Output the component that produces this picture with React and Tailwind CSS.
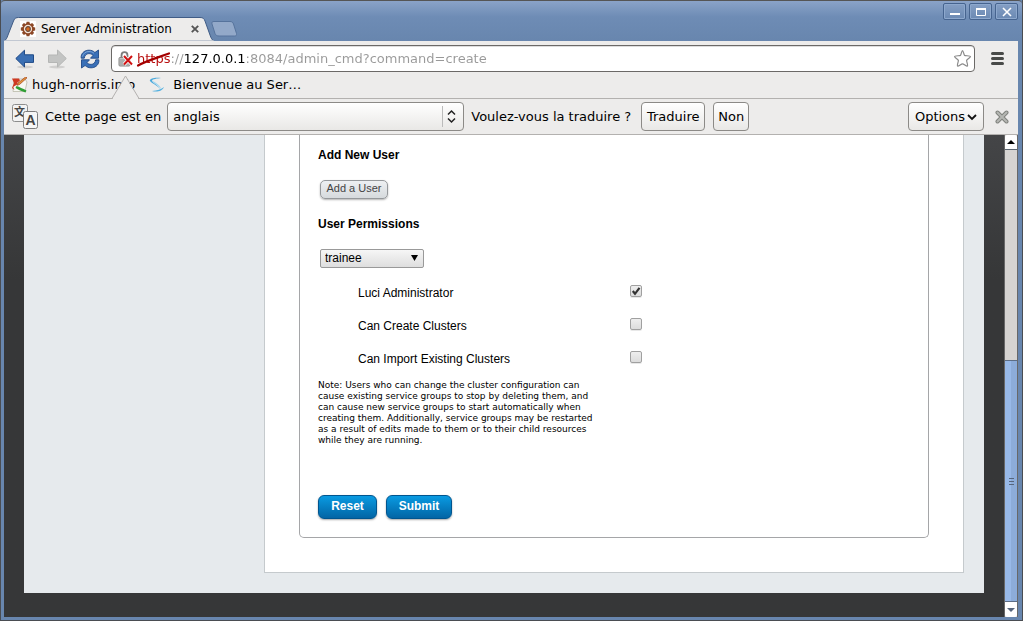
import { useState } from "react";

const permissions = [
  { id: "luci-admin", label: "Luci Administrator", checked: true },
  { id: "create-clusters", label: "Can Create Clusters", checked: false },
  { id: "import-clusters", label: "Can Import Existing Clusters", checked: false },
];

const windowButton =
  "flex h-[17px] w-[23px] items-center justify-center rounded-[2px] border border-[#46648f] shadow-[inset_0_0_0_1px_#8da8cd]";

const infoButton =
  "h-[29px] rounded-[4px] border border-[#8c8a87] bg-linear-to-b from-white to-[#e9e8e6] text-center whitespace-nowrap";

const blueButton =
  "h-6 rounded-[6px] border border-[#00558f] bg-linear-to-b from-[#0a9be2] to-[#0365a5] pb-[2px] text-[12px] font-bold text-white shadow-[0_1px_2px_rgba(0,0,0,0.35)]";

function GearIcon() {
  return (
    <svg className="size-4 shrink-0" viewBox="0 0 16 16">
      <rect width="16" height="16" fill="#fff" />
      {[0, 45, 90, 135, 180, 225, 270, 315].map((angle) => (
        <path
          key={angle}
          d="M6 3.2 6.6.8h2.8l.6 2.4z"
          fill="#8a4a2a"
          transform={`rotate(${angle} 8 8)`}
        />
      ))}
      <circle cx="8" cy="8" r="4.9" fill="#f3e4d8" stroke="#8e4523" strokeWidth="1.5" />
      <circle cx="8" cy="8" r="2.3" fill="#d96a1e" stroke="#6b4a3a" strokeWidth="1.2" />
    </svg>
  );
}

function ArrowIcon({ disabled }) {
  return (
    <svg className="h-5 w-5" viewBox="0 0 20 20">
      <ellipse cx="10" cy="18" rx="8" ry="1.4" fill="#000" opacity="0.12" />
      {disabled ? (
        <path d="M19.3 9.5 10.5 1v5H1.5v7.5h9v4.5z" fill="#c3c4c3" stroke="#b5b6b5" />
      ) : (
        <path d="M.8 9.5 9.5 1.2v4.6h9v7.6h-9V18z" fill="#3b6fb3" stroke="#204a87" />
      )}
    </svg>
  );
}

function ReloadIcon() {
  return (
    <svg className="h-5 w-5" viewBox="0 0 20 20">
      <g fill="#3a70b7" stroke="#204a87" strokeWidth="0.9" strokeLinejoin="round">
        <path d="M1.2 9.2V7.3C1.8 3.5 5 1.2 9 1.2c2.4 0 4.3.8 5.9 2.3L18.5 1v8.2h-8l2.6-2.9C11.9 5.1 10.5 4.6 8.9 4.6c-2.8 0-4.3 2-4.6 4.6z" />
        <path d="M18.8 10.8v1.9c-.6 3.8-3.8 6.1-7.8 6.1-2.4 0-4.3-.8-5.9-2.3L1.5 19v-8.2h8l-2.6 2.9c1.2 1.2 2.6 1.7 4.2 1.7 2.8 0 4.3-2 4.6-4.6z" />
      </g>
      <path d="M2.5 7.5C3.4 4 6 2.5 9 2.5c2 0 3.6.6 5 1.8" fill="none" stroke="#8fb4e0" strokeWidth="0.8" />
    </svg>
  );
}

function LockIcon() {
  return (
    <svg className="h-4 w-4 shrink-0" viewBox="0 0 16 16">
      <path d="M3.5 7V4.5a3 3.3 0 0 1 6 0V7" fill="none" stroke="#7c7c7c" strokeWidth="1.8" />
      <rect x="1" y="6.5" width="11" height="8.5" rx="1" fill="#c5c5c3" stroke="#868685" />
      <path d="M2 9h9M2 11h9M2 13h9" stroke="#8c8c8a" strokeWidth="0.8" />
      <path d="M6 5l8 8.500M14 5L6 13.500" stroke="#fff" strokeWidth="3.600" />
      <path d="M6 5l8 8.500M14 5L6 13.500" stroke="#cf1111" strokeWidth="2" />
    </svg>
  );
}

function TitleBar() {
  return (
    <header className="flex h-[41px] items-start justify-between rounded-t-[4px] border-t border-[#555] bg-linear-to-b from-[#8aa3c8] via-[#6e8cb5] via-40% to-[#6886ae] pr-1 pl-[3px]">
      <div className="flex items-start pt-4">
        <div className="relative flex h-6 w-[210px] items-center">
          <svg className="absolute inset-0 h-6 w-[210px]" viewBox="0 0 210 24">
            <path
              d="M0 24c2-1 3-3 4-6L9.5 4c1-3 3-3.5 5-3.5H196c3 0 4 1 5 3.5l5 14c1 3 2 5 4 6z"
              fill="#edeceb"
              stroke="#405c86"
            />
            <path d="M0 24h210" stroke="#edeceb" strokeWidth="1" />
          </svg>
          <div className="relative flex w-full items-center pr-[11px] pl-4">
            <GearIcon />
            <span className="ml-[5px] flex-1 text-[12px] whitespace-nowrap">Server Administration</span>
            <button aria-label="Close tab" className="flex size-4 items-center justify-center">
              <svg className="size-2" viewBox="0 0 8 8">
                <path d="M.8.8l6.4 6.4M7.2.8L.8 7.2" stroke="#555" strokeWidth="1.9" />
              </svg>
            </button>
          </div>
        </div>
        <button aria-label="New tab" className="-ml-[3px] mt-1">
          <svg className="h-4 w-[26px]" viewBox="0 0 26 16">
            <path
              d="M3 .5h16c2 0 3 1 3.500 2.500l3 9.500c.4 1.800-.3 2.500-2 2.500H8c-2 0-3.200-.7-4-2.500L1 3C.5 1.500 1 .5 3 .5z"
              fill="#93a9c9"
              stroke="#56739c"
            />
          </svg>
        </button>
      </div>
      <div className="flex gap-[3px] pt-[2px]">
        <button aria-label="Minimize" className={windowButton}>
          <svg className="h-3 w-3" viewBox="0 0 12 12">
            <path d="M1 8h10" stroke="#fff" strokeWidth="2" />
          </svg>
        </button>
        <button aria-label="Maximize" className={windowButton}>
          <svg className="h-3 w-3" viewBox="0 0 12 12">
            <path d="M1.500 2.500h9v7h-9z" fill="none" stroke="#fff" />
            <path d="M1 3h10" stroke="#fff" strokeWidth="2" />
          </svg>
        </button>
        <button aria-label="Close" className={windowButton}>
          <svg className="h-3 w-3" viewBox="0 0 12 12">
            <path d="M2 2l8 8M10 2l-8 8" stroke="#fff" strokeWidth="1.600" />
          </svg>
        </button>
      </div>
    </header>
  );
}

function Toolbar() {
  return (
    <div className="flex h-[33px] items-center pt-[2px] pr-[14px] pl-[11px]">
      <button aria-label="Back">
        <ArrowIcon />
      </button>
      <button aria-label="Forward" className="ml-3">
        <ArrowIcon disabled />
      </button>
      <button aria-label="Reload" className="ml-[13px]">
        <ReloadIcon />
      </button>
      <div className="relative ml-[11px] flex h-[27px] flex-1 items-center rounded-[4px] border border-[#6b6967] bg-white pr-[2px] pl-[6px] shadow-[inset_0_1px_0_#ddd]">
        <LockIcon />
        <input
          aria-label="Address"
          defaultValue="https://127.0.0.1:8084/admin_cmd?command=create"
          className="ml-[3px] h-6 min-w-0 flex-1 bg-linear-[90deg,#b80d0d_34px,#999_34px,#999_47px,#000_47px,#000_109px,#999_109px] bg-clip-text text-[13px] text-transparent outline-none"
        />
        <svg className="pointer-events-none absolute left-[24px] h-4 w-9" viewBox="0 0 36 16">
          <path d="M2 14.500C11 9.500 22 6.500 33 2.500" fill="none" stroke="#a40000" strokeWidth="2.200" strokeLinecap="round" />
        </svg>
        <button aria-label="Bookmark this page">
          <svg className="h-[19px] w-[19px]" viewBox="0 0 19 19">
            <path
              d="M9.500 1.500c.8 0 1.200 3.800 2 4.900 1 .5 6 .2 6 1.200s-3.600 2.700-3.900 3.900c0 1.200 1.600 5.100.8 5.600-.9.500-3.700-2.300-4.900-2.300s-4 2.800-4.900 2.300c-.8-.5.8-4.400.8-5.600C5.100 10.300 1.500 8.600 1.500 7.600s5-.7 6-1.200c.8-1.100 1.200-4.900 2-4.900z"
              fill="#fff"
              stroke="#8a8a8a"
              strokeWidth="1.200"
            />
          </svg>
        </button>
      </div>
      <button aria-label="Menu" className="ml-4 flex w-[13px] flex-col gap-[2px]">
        <span className="h-[3px] rounded-full bg-[#484a48]" />
        <span className="h-[3px] rounded-full bg-[#484a48]" />
        <span className="h-[3px] rounded-full bg-[#484a48]" />
      </button>
    </div>
  );
}

function Bookmarks() {
  return (
    <nav className="relative flex h-[25px] items-center border-b border-[#b3b1af] px-2 pb-[2px]">
      <a href="#hugh" className="flex items-center gap-1">
        <svg className="size-4" viewBox="0 0 16 16">
          <path d="M2 2h11l2 3-2 9.500H1z" fill="#f7f7f2" stroke="#b9b9a8" strokeWidth="0.800" />
          <path d="M0 1.500h7l1 2-3 2.500 1 1-5 3 1.500 3L0 11l2-5z" fill="#cf3a22" />
          <path d="M15 .8L7.500 7.500l-2.500.8 1-2.300L13.500 0z" fill="#e39a3a" stroke="#a33a1a" strokeWidth="0.700" />
          <path d="M4.500 9c3 1 6 2.500 10 4.500l-1 2C10 14 6 13 3.500 11z" fill="#2f9e34" />
        </svg>
        hugh-norris.info
      </a>
      <a href="#bienvenue" className="ml-[14px] flex items-center gap-2">
        <svg className="size-4" viewBox="0 0 16 16">
          <path d="M12 1C6 0 1 1.500.8 3.500 1 5.500 9 8.500 11.500 12.500 10 8.500 3 5.500 3 3.500 3.500 2 8 1.500 12 1z" fill="#4ba9dc" />
          <path d="M3 3.500c3 2 8.500 4.500 9.500 9C10.500 9 5.500 7 3 3.500z" fill="#9ad5f1" />
          <path d="M3 14c5 1.500 10.500 0 12-4-2.500 2.500-7 3.500-12 4z" fill="#55b1e0" />
        </svg>
        Bienvenue au Ser…
      </a>
      {/* pointer that ties the translate bar to the address field */}
      <svg className="absolute top-[1px] left-[107px] h-6 w-[30px]" viewBox="0 0 30 24">
        <path d="M1.500 24L14.500 1l13 23z" fill="#edeceb" />
        <path d="M1 23.500L14.500 1 28 23.500" fill="none" stroke="#b3b1af" />
      </svg>
    </nav>
  );
}

function TranslateIcon() {
  return (
    <svg className="h-[26px] w-[27px] shrink-0" viewBox="0 0 27 26">
      <rect x=".5" y=".5" width="15" height="17" rx="2" fill="#f3f3f3" stroke="#8d8d8d" />
      <text x="7.500" y="12" textAnchor="middle" fill="#444" className="font-['Noto_Sans_CJK_SC',sans-serif] text-[11px] font-bold">文</text>
      <rect x="11.500" y="7.500" width="14" height="17" rx="2" fill="#f6f6f6" stroke="#7d7d7d" />
      <text x="18.500" y="21" textAnchor="middle" fill="#444" className="font-['Liberation_Sans',sans-serif] text-[14px] font-bold">A</text>
    </svg>
  );
}

function TranslateBar() {
  return (
    <section className="flex h-9 items-center border-b border-[#b3b1af] pr-[9px] pl-2">
      <TranslateIcon />
      <label htmlFor="language" className="ml-[6px] whitespace-nowrap">
        Cette page est en
      </label>
      <div className="relative ml-[6px] w-[297px]">
        <select
          id="language"
          className="block h-[29px] w-full appearance-none rounded-[4px] border border-[#8c8a87] bg-linear-to-b from-white to-[#e9e8e6] px-[5px]"
        >
          <option>anglais</option>
          <option>français</option>
        </select>
        <svg className="pointer-events-none absolute top-1 right-0 h-[21px] w-[22px]" viewBox="0 0 22 21">
          <path d="M.5 0v21" stroke="#bbb" />
          <path d="M6 8.500L9.500 5l3.500 3.500M6 12.500L9.500 16l3.500-3.500" fill="none" stroke="#222" strokeWidth="1.500" />
        </svg>
      </div>
      <span className="ml-[7px] whitespace-nowrap">Voulez-vous la traduire ?</span>
      <button className={`${infoButton} ml-[10px] w-16`}>Traduire</button>
      <button className={`${infoButton} ml-2 w-9`}>Non</button>
      <button className={`${infoButton} ml-auto flex w-[76px] items-center justify-center gap-[2px]`}>
        Options
        <svg className="h-[10px] w-[10px]" viewBox="0 0 10 10">
          <path d="M1 3l4 4 4-4" fill="none" stroke="#111" strokeWidth="1.800" />
        </svg>
      </button>
      <button aria-label="Dismiss" className="ml-[11px]">
        <svg className="h-[14px] w-[14px]" viewBox="0 0 14 14">
          <path d="M2.500 2.500l9 9M11.500 2.500l-9 9" stroke="#80827e" strokeWidth="4" strokeLinecap="round" />
          <path d="M2.500 2.500l9 9M11.500 2.500l-9 9" stroke="#b5b7b3" strokeWidth="2" strokeLinecap="round" />
        </svg>
      </button>
    </section>
  );
}

function Permission({ id, label, checked }) {
  const [on, setOn] = useState(checked);
  return (
    <div className="flex h-[33px] items-center pl-10">
      <label htmlFor={id} className="w-[272px]">
        {label}
      </label>
      <span className="relative mb-[6px] flex">
        <input
          id={id}
          type="checkbox"
          checked={on}
          onChange={() => setOn(!on)}
          className="size-3 appearance-none rounded-[2px] border border-[#a0a0a0] bg-linear-to-b from-[#eee] to-[#dcdcdc] shadow-[0_1px_0_#e8e8e8]"
        />
        {on && (
          <svg className="pointer-events-none absolute inset-0 size-3" viewBox="0 0 12 12">
            <path d="M2.800 6l2.200 2.800L9.500 2.800" fill="none" stroke="#333" strokeWidth="2.200" />
          </svg>
        )}
      </span>
    </div>
  );
}

function AdminPage() {
  return (
    <main className="min-w-0 flex-1 bg-linear-to-b from-[#444547] to-[#363738] to-30% px-5 pb-6 font-['Liberation_Sans',Arial,sans-serif] text-[12px] leading-[15px]">
      <div className="bg-[#e6eaed] pr-5 pb-5 pl-60">
        <div className="border border-t-0 border-[#c5cacd] bg-white px-[34px] pb-[34px]">
          <div className="rounded-b-[5px] border border-t-0 border-[#a5a6a8] px-[18px] pt-[10px] pb-[18px]">
            <h2 className="h-5 leading-5 font-bold">Add New User</h2>
            <button className="mt-[15px] ml-[2px] block h-[19px] w-[68px] rounded-[5px] border border-[#95989b] bg-linear-to-b from-[#eef0f2] to-[#d6dadd] pb-[2px] text-[11px] whitespace-nowrap text-[#444] shadow-[0_1px_2px_rgba(0,0,0,0.3)]">
              Add a User
            </button>
            <h2 className="mt-[15px] h-5 leading-5 font-bold">User Permissions</h2>
            <div className="relative mt-[15px] ml-[2px] w-[104px]">
              <select
                aria-label="User"
                className="block h-[19px] w-full appearance-none rounded-[2px] border border-[#999] bg-linear-to-b from-[#f6f6f6] to-[#dedede] px-1"
              >
                <option>trainee</option>
              </select>
              <svg className="pointer-events-none absolute top-[6px] right-[6px] h-[6px] w-[7px]" viewBox="0 0 7 6">
                <path d="M0 0h7L3.500 6z" />
              </svg>
            </div>
            <div className="mt-[9px]">
              {permissions.map((item) => (
                <Permission key={item.id} {...item} />
              ))}
            </div>
            <p className="mt-1 font-['DejaVu_Sans',sans-serif] text-[9px] leading-[11px]">
              Note: Users who can change the cluster configuration can
              <br />
              cause existing service groups to stop by deleting them, and
              <br />
              can cause new service groups to start automatically when
              <br />
              creating them. Additionally, service groups may be restarted
              <br />
              as a result of edits made to them or to their child resources
              <br />
              while they are running.
            </p>
            <div className="mt-[49px] flex gap-[9px]">
              <button className={`${blueButton} w-[59px]`}>Reset</button>
              <button className={`${blueButton} w-[66px]`}>Submit</button>
            </div>
          </div>
        </div>
      </div>
    </main>
  );
}

function Scrollbar() {
  return (
    <div className="flex w-[14px] shrink-0 flex-col border-x border-[#686868] bg-[#d6d4d2]">
      <button aria-label="Scroll up" className="flex h-[15px] items-center justify-center rounded-t-[2px] border-b border-[#5a6570] bg-white">
        <svg className="h-1 w-2" viewBox="0 0 8 4">
          <path d="M4 0l4 4H0z" />
        </svg>
      </button>
      <div className="grow-[210] basis-0" />
      <div className="flex grow-[240] basis-0 flex-col items-center justify-center gap-[2px] border-y border-[#5c6d85] bg-linear-to-r from-[#98b9e8] from-50% to-[#8cacd9] to-50%">
        <span className="h-px w-[5px] bg-[#56657c]" />
        <span className="h-px w-[5px] bg-[#56657c]" />
        <span className="h-px w-[5px] bg-[#56657c]" />
      </div>
      <button aria-label="Scroll down" className="flex h-[15px] items-center justify-center rounded-b-[2px] bg-white">
        <svg className="h-1 w-2" viewBox="0 0 8 4">
          <path d="M0 0h8L4 4z" fill="#56657c" />
        </svg>
      </button>
    </div>
  );
}

export default function App() {
  return (
    <div className="flex min-h-screen flex-col border-x border-b border-[#4a4d52] bg-[#6886ae] font-['DejaVu_Sans',sans-serif] text-[13px] leading-4 text-black">
      <TitleBar />
      <div className="mr-1 mb-[3px] ml-[3px] flex flex-1 flex-col bg-[#edeceb]">
        <Toolbar />
        <Bookmarks />
        <TranslateBar />
        <div className="flex flex-1">
          <AdminPage />
          <Scrollbar />
        </div>
      </div>
    </div>
  );
}
